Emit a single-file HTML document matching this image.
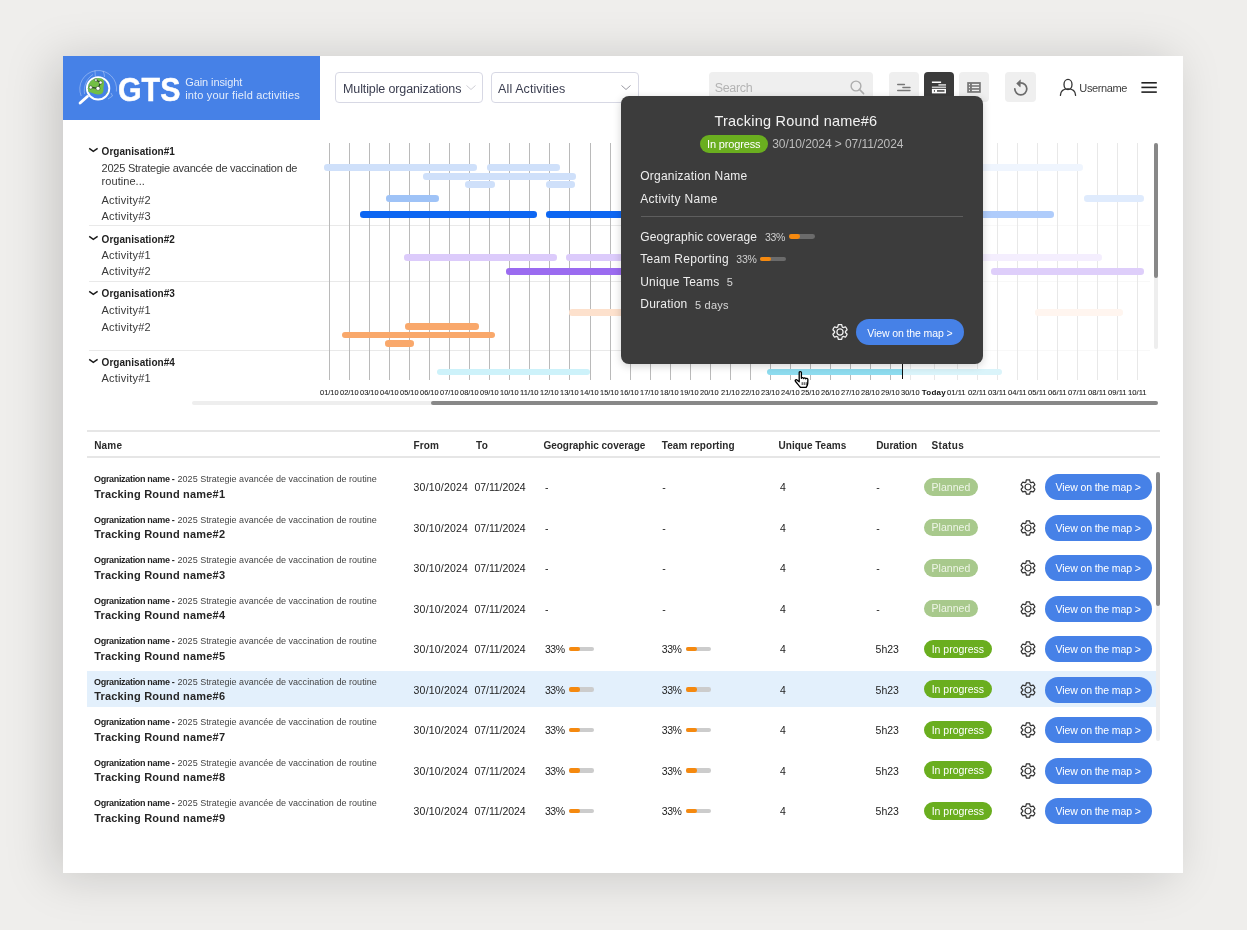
<!DOCTYPE html>
<html><head><meta charset="utf-8"><style>
html,body{margin:0;padding:0;}
body{width:1247px;height:930px;overflow:hidden;background:#efeeec;font-family:"Liberation Sans", sans-serif;position:relative;}
#wrap{position:absolute;left:0;top:0;width:1247px;height:930px;will-change:transform;}
</style></head><body><div id="wrap">
<div style="position:absolute;left:63.00px;top:56.00px;width:1120.00px;height:817.00px;background:#ffffff;border-radius:0px;box-shadow:-10px 3px 45px rgba(0,0,0,0.17);"></div>
<div style="position:absolute;left:63.00px;top:56.00px;width:257.00px;height:64.00px;background:#4681e7;border-radius:0px;"></div>
<svg style="position:absolute;left:70px;top:62px" width="50" height="50" viewBox="70 62 50 50">
<g fill="none" stroke="rgba(255,255,255,0.42)" stroke-width="0.8">
<path d="M81.2 96 A18.4 18.4 0 1 1 116.4 91.5"/>
<path d="M84.5 94 C83.5 87 86 79 93 74.5"/>
<path d="M95 70.5 L95.3 76.5 M103 71 C104 73 104.5 75 104.5 77"/>
<path d="M108 99 L112.5 96 L111 93"/>
</g>
<circle cx="98.1" cy="88.3" r="11.2" fill="#4681e7" stroke="#fff" stroke-width="1.9"/>
<clipPath id="lc"><circle cx="98.1" cy="88.3" r="10.3"/></clipPath>
<g clip-path="url(#lc)">
<path d="M86 79 C88 76 94 76.5 99 77 C102 77.5 104 79 104 83 C104 86 103 88 103.5 90.5 C103.5 93 101 95 97.5 94.5 C94 94 92 92.5 89 92 C86 91.5 85.5 88 86 85 Z" fill="#72bf44"/>
<path d="M106 94 C106.5 92 108 91 109.5 91 L109.5 95.5 L106.5 95.5 Z" fill="#72bf44"/>
</g>
<g stroke="#263d26" stroke-width="1.1" fill="none"><path d="M95.9 80.1 L100.6 82.5 L98 88.4 L90.7 87.4"/></g>
<g fill="#fff" stroke="#263d26" stroke-width="0.5"><circle cx="95.9" cy="80.1" r="1.3"/><circle cx="100.6" cy="82.5" r="1.6"/><circle cx="98" cy="88.4" r="2"/><circle cx="90.7" cy="87.4" r="1.6"/></g>
<path d="M80.1 103 L87.4 96.5" stroke="#fff" stroke-width="2.9" stroke-linecap="round"/>
</svg>
<div style="position:absolute;left:117.64px;top:69.00px;font-size:34px;line-height:40.00px;font-weight:700;color:#ffffff;letter-spacing:0.000px;white-space:pre;transform:scaleX(0.8930);transform-origin:0 0;-webkit-text-stroke:0.5px #fff;">GTS</div>
<div style="position:absolute;left:185.16px;top:75.00px;font-size:11px;line-height:14.00px;font-weight:400;color:#e3ecfb;letter-spacing:-0.083px;white-space:pre;">Gain insight</div>
<div style="position:absolute;left:185.16px;top:88.00px;font-size:11px;line-height:14.00px;font-weight:400;color:#e3ecfb;letter-spacing:0.156px;white-space:pre;">into your field activities</div>
<div style="position:absolute;left:335.00px;top:72.00px;width:148.00px;height:30.50px;background:#fff;border-radius:4px;box-sizing:border-box;border:1px solid #d7d8e4;"></div>
<div style="position:absolute;left:343.00px;top:81.00px;font-size:12.5px;line-height:16.00px;font-weight:400;color:#3b3e50;letter-spacing:-0.119px;white-space:pre;">Multiple organizations</div>
<svg style="position:absolute;left:465px;top:84px" width="12" height="7" viewBox="0 0 12 7"><path d="M1.5 1.5 L6 5.5 L10.5 1.5" fill="none" stroke="#cfcfd6" stroke-width="1"/></svg>
<div style="position:absolute;left:491.00px;top:72.00px;width:147.50px;height:30.50px;background:#fff;border-radius:4px;box-sizing:border-box;border:1px solid #d7d8e4;"></div>
<div style="position:absolute;left:498.10px;top:81.00px;font-size:12.5px;line-height:16.00px;font-weight:400;color:#3b3e50;letter-spacing:0.092px;white-space:pre;">All Activities</div>
<svg style="position:absolute;left:620px;top:84px" width="12" height="7" viewBox="0 0 12 7"><path d="M1.5 1.5 L6 5.5 L10.5 1.5" fill="none" stroke="#9a9aa3" stroke-width="1"/></svg>
<div style="position:absolute;left:709.00px;top:72.00px;width:164.00px;height:30.00px;background:#efefef;border-radius:4px;"></div>
<div style="position:absolute;left:714.70px;top:80.00px;font-size:12.5px;line-height:16.00px;font-weight:400;color:#b4b4b4;letter-spacing:-0.342px;white-space:pre;">Search</div>
<svg style="position:absolute;left:848.5px;top:78.6px" width="17" height="17" viewBox="0 0 17 17"><circle cx="7" cy="7" r="4.9" fill="none" stroke="#adadad" stroke-width="1.4"/><path d="M10.4 10.4 L14.6 14.6" stroke="#adadad" stroke-width="1.5" stroke-linecap="round"/></svg>
<div style="position:absolute;left:889.00px;top:72.00px;width:30.00px;height:30.00px;background:#efefef;border-radius:4px;"></div>
<div style="position:absolute;left:923.60px;top:72.00px;width:30.70px;height:30.00px;background:#3b3b3b;border-radius:4px;"></div>
<div style="position:absolute;left:959.00px;top:72.00px;width:30.00px;height:30.00px;background:#efefef;border-radius:4px;"></div>
<div style="position:absolute;left:1005.20px;top:72.00px;width:30.50px;height:30.00px;background:#efefef;border-radius:4px;"></div>
<svg style="position:absolute;left:886px;top:70px" width="106" height="34" viewBox="886 70 106 34">
<g fill="#777"><rect x="897" y="83.8" width="8.1" height="1.5" rx="0.7"/><rect x="902.2" y="86.8" width="8.5" height="1.5" rx="0.7"/><rect x="897" y="89.7" width="13.7" height="1.5" rx="0.7"/></g>
<rect x="931.9" y="81.5" width="9.2" height="1.5" fill="#fff"/>
<rect x="938.4" y="84.1" width="7.6" height="1.6" fill="#d0d0d0"/>
<rect x="931.9" y="86.5" width="14.1" height="1.6" fill="#c8c8c8"/>
<rect x="931.9" y="88.9" width="14.1" height="4.5" fill="#fff"/>
<rect x="933.9" y="90.2" width="1.1" height="1.5" fill="#3b3b3b"/><rect x="937" y="90.2" width="7.5" height="1.5" fill="#3b3b3b"/>
<rect x="967.2" y="82.1" width="13.6" height="10.7" fill="#777"/>
<g fill="#efefef"><rect x="971.9" y="83.9" width="7.2" height="1.3"/><rect x="971.9" y="86.8" width="7.2" height="1.3"/><rect x="971.9" y="89.8" width="7.2" height="1.3"/>
<rect x="968.9" y="83.9" width="1.1" height="1.3"/><rect x="968.9" y="86.8" width="1.1" height="1.3"/><rect x="968.9" y="89.8" width="1.1" height="1.3"/></g>
</svg>
<svg style="position:absolute;left:1005.2px;top:72px" width="31" height="30" viewBox="0 0 31 30">
<path d="M15.8 10.8 A6 6 0 1 1 9.8 16.8" fill="none" stroke="#6b6b6b" stroke-width="1.7" stroke-linecap="round"/>
<path d="M15.4 7.9 L11.6 11.5 L15.2 14.9 Z" fill="#6b6b6b" stroke="#6b6b6b" stroke-width="0.6" stroke-linejoin="round"/></svg>
<svg style="position:absolute;left:1059px;top:78px" width="18" height="19" viewBox="0 0 18 19">
<ellipse cx="9" cy="6.4" rx="4.0" ry="5.1" fill="none" stroke="#333" stroke-width="1.3"/>
<path d="M1.4 17.4 C1.6 13 4.8 10.9 9 10.9 C13.2 10.9 16.4 13 16.6 17.4" fill="none" stroke="#333" stroke-width="1.3" stroke-linecap="round"/></svg>
<div style="position:absolute;left:1079.36px;top:81.00px;font-size:11px;line-height:14.00px;font-weight:400;color:#3d3d3d;letter-spacing:-0.381px;white-space:pre;">Username</div>
<svg style="position:absolute;left:1140px;top:80px" width="18" height="15" viewBox="1140 80 18 15"><g fill="#222"><rect x="1141.4" y="82" width="15.4" height="1.6"/><rect x="1141.4" y="86.6" width="15.4" height="1.6"/><rect x="1141.4" y="91.3" width="15.4" height="1.6"/></g></svg>
<svg style="position:absolute;left:88px;top:146.1px" width="11" height="7" viewBox="0 0 11 7"><path d="M1.2 2.3 L5.3 5.3 L9.6 2.3" fill="none" stroke="#1a1a1a" stroke-width="1.45"/></svg>
<div style="position:absolute;left:101.60px;top:145.00px;font-size:10px;line-height:13.00px;font-weight:700;color:#1e1e1e;letter-spacing:0.037px;white-space:pre;">Organisation#1</div>
<svg style="position:absolute;left:88px;top:233.6px" width="11" height="7" viewBox="0 0 11 7"><path d="M1.2 2.3 L5.3 5.3 L9.6 2.3" fill="none" stroke="#1a1a1a" stroke-width="1.45"/></svg>
<div style="position:absolute;left:101.60px;top:233.00px;font-size:10px;line-height:13.00px;font-weight:700;color:#1e1e1e;letter-spacing:0.037px;white-space:pre;">Organisation#2</div>
<svg style="position:absolute;left:88px;top:288.5px" width="11" height="7" viewBox="0 0 11 7"><path d="M1.2 2.3 L5.3 5.3 L9.6 2.3" fill="none" stroke="#1a1a1a" stroke-width="1.45"/></svg>
<div style="position:absolute;left:101.60px;top:287.00px;font-size:10px;line-height:13.00px;font-weight:700;color:#1e1e1e;letter-spacing:0.037px;white-space:pre;">Organisation#3</div>
<svg style="position:absolute;left:88px;top:356.8px" width="11" height="7" viewBox="0 0 11 7"><path d="M1.2 2.3 L5.3 5.3 L9.6 2.3" fill="none" stroke="#1a1a1a" stroke-width="1.45"/></svg>
<div style="position:absolute;left:101.60px;top:356.00px;font-size:10px;line-height:13.00px;font-weight:700;color:#1e1e1e;letter-spacing:0.037px;white-space:pre;">Organisation#4</div>
<div style="position:absolute;left:101.56px;top:161.00px;font-size:11px;line-height:14.00px;font-weight:400;color:#383838;letter-spacing:-0.231px;white-space:pre;">2025 Strategie avancée de vaccination de</div>
<div style="position:absolute;left:101.56px;top:174.00px;font-size:11px;line-height:14.00px;font-weight:400;color:#383838;letter-spacing:0.063px;white-space:pre;">routine...</div>
<div style="position:absolute;left:101.56px;top:193.00px;font-size:11px;line-height:14.00px;font-weight:400;color:#383838;letter-spacing:0.222px;white-space:pre;">Activity#2</div>
<div style="position:absolute;left:101.56px;top:209.00px;font-size:11px;line-height:14.00px;font-weight:400;color:#383838;letter-spacing:0.222px;white-space:pre;">Activity#3</div>
<div style="position:absolute;left:101.56px;top:248.00px;font-size:11px;line-height:14.00px;font-weight:400;color:#383838;letter-spacing:0.222px;white-space:pre;">Activity#1</div>
<div style="position:absolute;left:101.56px;top:264.00px;font-size:11px;line-height:14.00px;font-weight:400;color:#383838;letter-spacing:0.222px;white-space:pre;">Activity#2</div>
<div style="position:absolute;left:101.56px;top:303.00px;font-size:11px;line-height:14.00px;font-weight:400;color:#383838;letter-spacing:0.222px;white-space:pre;">Activity#1</div>
<div style="position:absolute;left:101.56px;top:320.00px;font-size:11px;line-height:14.00px;font-weight:400;color:#383838;letter-spacing:0.222px;white-space:pre;">Activity#2</div>
<div style="position:absolute;left:101.56px;top:371.00px;font-size:11px;line-height:14.00px;font-weight:400;color:#383838;letter-spacing:0.222px;white-space:pre;">Activity#1</div>
<div style="position:absolute;left:88.70px;top:225.20px;width:1061.80px;height:1.10px;background:#e9e9e9;border-radius:0px;"></div>
<div style="position:absolute;left:88.70px;top:280.80px;width:1061.80px;height:1.10px;background:#e9e9e9;border-radius:0px;"></div>
<div style="position:absolute;left:88.70px;top:350.10px;width:1061.80px;height:1.10px;background:#e9e9e9;border-radius:0px;"></div>
<div style="position:absolute;left:328.50px;top:143.00px;width:1.00px;height:237.00px;background:#bababa;border-radius:0px;"></div>
<div style="position:absolute;left:348.50px;top:143.00px;width:1.00px;height:237.00px;background:#bababa;border-radius:0px;"></div>
<div style="position:absolute;left:368.50px;top:143.00px;width:1.00px;height:237.00px;background:#bababa;border-radius:0px;"></div>
<div style="position:absolute;left:388.50px;top:143.00px;width:1.00px;height:237.00px;background:#bababa;border-radius:0px;"></div>
<div style="position:absolute;left:408.50px;top:143.00px;width:1.00px;height:237.00px;background:#bababa;border-radius:0px;"></div>
<div style="position:absolute;left:428.50px;top:143.00px;width:1.00px;height:237.00px;background:#bababa;border-radius:0px;"></div>
<div style="position:absolute;left:448.50px;top:143.00px;width:1.00px;height:237.00px;background:#bababa;border-radius:0px;"></div>
<div style="position:absolute;left:468.50px;top:143.00px;width:1.00px;height:237.00px;background:#bababa;border-radius:0px;"></div>
<div style="position:absolute;left:488.50px;top:143.00px;width:1.00px;height:237.00px;background:#bababa;border-radius:0px;"></div>
<div style="position:absolute;left:508.50px;top:143.00px;width:1.00px;height:237.00px;background:#bababa;border-radius:0px;"></div>
<div style="position:absolute;left:528.50px;top:143.00px;width:1.00px;height:237.00px;background:#bababa;border-radius:0px;"></div>
<div style="position:absolute;left:548.50px;top:143.00px;width:1.00px;height:237.00px;background:#bababa;border-radius:0px;"></div>
<div style="position:absolute;left:568.50px;top:143.00px;width:1.00px;height:237.00px;background:#bababa;border-radius:0px;"></div>
<div style="position:absolute;left:589.50px;top:143.00px;width:1.00px;height:237.00px;background:#bababa;border-radius:0px;"></div>
<div style="position:absolute;left:609.50px;top:143.00px;width:1.00px;height:237.00px;background:#bababa;border-radius:0px;"></div>
<div style="position:absolute;left:629.50px;top:143.00px;width:1.00px;height:237.00px;background:#bababa;border-radius:0px;"></div>
<div style="position:absolute;left:649.50px;top:143.00px;width:1.00px;height:237.00px;background:#bababa;border-radius:0px;"></div>
<div style="position:absolute;left:669.50px;top:143.00px;width:1.00px;height:237.00px;background:#bababa;border-radius:0px;"></div>
<div style="position:absolute;left:689.50px;top:143.00px;width:1.00px;height:237.00px;background:#bababa;border-radius:0px;"></div>
<div style="position:absolute;left:709.50px;top:143.00px;width:1.00px;height:237.00px;background:#bababa;border-radius:0px;"></div>
<div style="position:absolute;left:729.50px;top:143.00px;width:1.00px;height:237.00px;background:#bababa;border-radius:0px;"></div>
<div style="position:absolute;left:749.50px;top:143.00px;width:1.00px;height:237.00px;background:#bababa;border-radius:0px;"></div>
<div style="position:absolute;left:769.50px;top:143.00px;width:1.00px;height:237.00px;background:#bababa;border-radius:0px;"></div>
<div style="position:absolute;left:789.50px;top:143.00px;width:1.00px;height:237.00px;background:#bababa;border-radius:0px;"></div>
<div style="position:absolute;left:809.50px;top:143.00px;width:1.00px;height:237.00px;background:#bababa;border-radius:0px;"></div>
<div style="position:absolute;left:829.50px;top:143.00px;width:1.00px;height:237.00px;background:#bababa;border-radius:0px;"></div>
<div style="position:absolute;left:849.50px;top:143.00px;width:1.00px;height:237.00px;background:#bababa;border-radius:0px;"></div>
<div style="position:absolute;left:869.50px;top:143.00px;width:1.00px;height:237.00px;background:#bababa;border-radius:0px;"></div>
<div style="position:absolute;left:889.50px;top:143.00px;width:1.00px;height:237.00px;background:#bababa;border-radius:0px;"></div>
<div style="position:absolute;left:909.50px;top:143.00px;width:1.00px;height:237.00px;background:#bababa;border-radius:0px;"></div>
<div style="position:absolute;left:933.50px;top:143.00px;width:1.00px;height:237.00px;background:#bababa;border-radius:0px;"></div>
<div style="position:absolute;left:956.50px;top:143.00px;width:1.00px;height:237.00px;background:#bababa;border-radius:0px;"></div>
<div style="position:absolute;left:976.50px;top:143.00px;width:1.00px;height:237.00px;background:#bababa;border-radius:0px;"></div>
<div style="position:absolute;left:996.50px;top:143.00px;width:1.00px;height:237.00px;background:#bababa;border-radius:0px;"></div>
<div style="position:absolute;left:1016.50px;top:143.00px;width:1.00px;height:237.00px;background:#bababa;border-radius:0px;"></div>
<div style="position:absolute;left:1036.50px;top:143.00px;width:1.00px;height:237.00px;background:#bababa;border-radius:0px;"></div>
<div style="position:absolute;left:1056.50px;top:143.00px;width:1.00px;height:237.00px;background:#bababa;border-radius:0px;"></div>
<div style="position:absolute;left:1076.50px;top:143.00px;width:1.00px;height:237.00px;background:#bababa;border-radius:0px;"></div>
<div style="position:absolute;left:1096.50px;top:143.00px;width:1.00px;height:237.00px;background:#bababa;border-radius:0px;"></div>
<div style="position:absolute;left:1116.50px;top:143.00px;width:1.00px;height:237.00px;background:#bababa;border-radius:0px;"></div>
<div style="position:absolute;left:1136.50px;top:143.00px;width:1.00px;height:237.00px;background:#bababa;border-radius:0px;"></div>
<div style="position:absolute;left:323.70px;top:164.30px;width:152.90px;height:6.60px;background:#cfe0fa;border-radius:3.3px;"></div>
<div style="position:absolute;left:486.60px;top:164.30px;width:73.40px;height:6.60px;background:#cfe0fa;border-radius:3.3px;"></div>
<div style="position:absolute;left:700.00px;top:164.30px;width:383.20px;height:6.60px;background:#cfe0fa;border-radius:3.3px;"></div>
<div style="position:absolute;left:423.20px;top:173.10px;width:152.80px;height:6.60px;background:#cfe0fa;border-radius:3.3px;"></div>
<div style="position:absolute;left:465.20px;top:181.30px;width:29.60px;height:6.60px;background:#cfe0fa;border-radius:3.3px;"></div>
<div style="position:absolute;left:545.60px;top:181.30px;width:29.20px;height:6.60px;background:#cfe0fa;border-radius:3.3px;"></div>
<div style="position:absolute;left:386.00px;top:195.00px;width:52.90px;height:6.60px;background:#9fc3f7;border-radius:3.3px;"></div>
<div style="position:absolute;left:1084.00px;top:195.00px;width:60.20px;height:6.60px;background:#9fc3f7;border-radius:3.3px;"></div>
<div style="position:absolute;left:360.00px;top:211.20px;width:177.10px;height:6.60px;background:#0d66f2;border-radius:3.3px;"></div>
<div style="position:absolute;left:546.10px;top:211.20px;width:507.90px;height:6.60px;background:#0d66f2;border-radius:3.3px;"></div>
<div style="position:absolute;left:403.70px;top:254.10px;width:152.90px;height:6.60px;background:#dccbfb;border-radius:3.3px;"></div>
<div style="position:absolute;left:565.60px;top:254.10px;width:536.80px;height:6.60px;background:#dccbfb;border-radius:3.3px;"></div>
<div style="position:absolute;left:506.40px;top:268.00px;width:293.60px;height:6.60px;background:#9b6bf0;border-radius:3.3px;"></div>
<div style="position:absolute;left:991.40px;top:268.00px;width:152.80px;height:6.60px;background:#9b6bf0;border-radius:3.3px;"></div>
<div style="position:absolute;left:568.50px;top:309.10px;width:151.50px;height:6.60px;background:#fde1cd;border-radius:3.3px;"></div>
<div style="position:absolute;left:1035.20px;top:309.10px;width:87.50px;height:6.60px;background:#fde1cd;border-radius:3.3px;"></div>
<div style="position:absolute;left:405.20px;top:323.10px;width:73.80px;height:6.60px;background:#f9a86b;border-radius:3.3px;"></div>
<div style="position:absolute;left:342.30px;top:331.80px;width:152.90px;height:6.60px;background:#f9a86b;border-radius:3.3px;"></div>
<div style="position:absolute;left:385.10px;top:340.00px;width:29.30px;height:6.60px;background:#f9a86b;border-radius:3.3px;"></div>
<div style="position:absolute;left:437.30px;top:369.00px;width:153.10px;height:6.20px;background:#cdf2fa;border-radius:3.1px;"></div>
<div style="position:absolute;left:766.80px;top:369.00px;width:234.90px;height:6.20px;background:#8edcef;border-radius:3.1px;"></div>
<div style="position:absolute;left:902.80px;top:142.00px;width:249.20px;height:239.00px;background:rgba(255,255,255,0.67);border-radius:0px;"></div>
<div style="position:absolute;left:901.70px;top:350.00px;width:1.60px;height:29.20px;background:#111;border-radius:0px;"></div>
<div style="position:absolute;left:319.70px;top:387.00px;font-size:7.5px;line-height:11.00px;font-weight:400;color:#222;letter-spacing:0.000px;white-space:pre;transform:scaleX(0.9900);transform-origin:0 0;-webkit-text-stroke:0.1px #222;">01/10</div>
<div style="position:absolute;left:339.74px;top:387.00px;font-size:7.5px;line-height:11.00px;font-weight:400;color:#222;letter-spacing:0.000px;white-space:pre;transform:scaleX(0.9900);transform-origin:0 0;-webkit-text-stroke:0.1px #222;">02/10</div>
<div style="position:absolute;left:359.78px;top:387.00px;font-size:7.5px;line-height:11.00px;font-weight:400;color:#222;letter-spacing:0.000px;white-space:pre;transform:scaleX(0.9900);transform-origin:0 0;-webkit-text-stroke:0.1px #222;">03/10</div>
<div style="position:absolute;left:379.82px;top:387.00px;font-size:7.5px;line-height:11.00px;font-weight:400;color:#222;letter-spacing:0.000px;white-space:pre;transform:scaleX(0.9900);transform-origin:0 0;-webkit-text-stroke:0.1px #222;">04/10</div>
<div style="position:absolute;left:399.86px;top:387.00px;font-size:7.5px;line-height:11.00px;font-weight:400;color:#222;letter-spacing:0.000px;white-space:pre;transform:scaleX(0.9900);transform-origin:0 0;-webkit-text-stroke:0.1px #222;">05/10</div>
<div style="position:absolute;left:419.90px;top:387.00px;font-size:7.5px;line-height:11.00px;font-weight:400;color:#222;letter-spacing:0.000px;white-space:pre;transform:scaleX(0.9900);transform-origin:0 0;-webkit-text-stroke:0.1px #222;">06/10</div>
<div style="position:absolute;left:439.94px;top:387.00px;font-size:7.5px;line-height:11.00px;font-weight:400;color:#222;letter-spacing:0.000px;white-space:pre;transform:scaleX(0.9900);transform-origin:0 0;-webkit-text-stroke:0.1px #222;">07/10</div>
<div style="position:absolute;left:459.98px;top:387.00px;font-size:7.5px;line-height:11.00px;font-weight:400;color:#222;letter-spacing:0.000px;white-space:pre;transform:scaleX(0.9900);transform-origin:0 0;-webkit-text-stroke:0.1px #222;">08/10</div>
<div style="position:absolute;left:480.02px;top:387.00px;font-size:7.5px;line-height:11.00px;font-weight:400;color:#222;letter-spacing:0.000px;white-space:pre;transform:scaleX(0.9900);transform-origin:0 0;-webkit-text-stroke:0.1px #222;">09/10</div>
<div style="position:absolute;left:500.06px;top:387.00px;font-size:7.5px;line-height:11.00px;font-weight:400;color:#222;letter-spacing:0.000px;white-space:pre;transform:scaleX(0.9900);transform-origin:0 0;-webkit-text-stroke:0.1px #222;">10/10</div>
<div style="position:absolute;left:520.09px;top:387.00px;font-size:7.5px;line-height:11.00px;font-weight:400;color:#222;letter-spacing:0.000px;white-space:pre;transform:scaleX(1.0216);transform-origin:0 0;-webkit-text-stroke:0.1px #222;">11/10</div>
<div style="position:absolute;left:540.14px;top:387.00px;font-size:7.5px;line-height:11.00px;font-weight:400;color:#222;letter-spacing:0.000px;white-space:pre;transform:scaleX(0.9900);transform-origin:0 0;-webkit-text-stroke:0.1px #222;">12/10</div>
<div style="position:absolute;left:560.18px;top:387.00px;font-size:7.5px;line-height:11.00px;font-weight:400;color:#222;letter-spacing:0.000px;white-space:pre;transform:scaleX(0.9900);transform-origin:0 0;-webkit-text-stroke:0.1px #222;">13/10</div>
<div style="position:absolute;left:580.22px;top:387.00px;font-size:7.5px;line-height:11.00px;font-weight:400;color:#222;letter-spacing:0.000px;white-space:pre;transform:scaleX(0.9900);transform-origin:0 0;-webkit-text-stroke:0.1px #222;">14/10</div>
<div style="position:absolute;left:600.26px;top:387.00px;font-size:7.5px;line-height:11.00px;font-weight:400;color:#222;letter-spacing:0.000px;white-space:pre;transform:scaleX(0.9900);transform-origin:0 0;-webkit-text-stroke:0.1px #222;">15/10</div>
<div style="position:absolute;left:620.30px;top:387.00px;font-size:7.5px;line-height:11.00px;font-weight:400;color:#222;letter-spacing:0.000px;white-space:pre;transform:scaleX(0.9900);transform-origin:0 0;-webkit-text-stroke:0.1px #222;">16/10</div>
<div style="position:absolute;left:640.34px;top:387.00px;font-size:7.5px;line-height:11.00px;font-weight:400;color:#222;letter-spacing:0.000px;white-space:pre;transform:scaleX(0.9900);transform-origin:0 0;-webkit-text-stroke:0.1px #222;">17/10</div>
<div style="position:absolute;left:660.38px;top:387.00px;font-size:7.5px;line-height:11.00px;font-weight:400;color:#222;letter-spacing:0.000px;white-space:pre;transform:scaleX(0.9900);transform-origin:0 0;-webkit-text-stroke:0.1px #222;">18/10</div>
<div style="position:absolute;left:680.42px;top:387.00px;font-size:7.5px;line-height:11.00px;font-weight:400;color:#222;letter-spacing:0.000px;white-space:pre;transform:scaleX(0.9900);transform-origin:0 0;-webkit-text-stroke:0.1px #222;">19/10</div>
<div style="position:absolute;left:700.46px;top:387.00px;font-size:7.5px;line-height:11.00px;font-weight:400;color:#222;letter-spacing:0.000px;white-space:pre;transform:scaleX(0.9900);transform-origin:0 0;-webkit-text-stroke:0.1px #222;">20/10</div>
<div style="position:absolute;left:720.50px;top:387.00px;font-size:7.5px;line-height:11.00px;font-weight:400;color:#222;letter-spacing:0.000px;white-space:pre;transform:scaleX(0.9900);transform-origin:0 0;-webkit-text-stroke:0.1px #222;">21/10</div>
<div style="position:absolute;left:740.54px;top:387.00px;font-size:7.5px;line-height:11.00px;font-weight:400;color:#222;letter-spacing:0.000px;white-space:pre;transform:scaleX(0.9900);transform-origin:0 0;-webkit-text-stroke:0.1px #222;">22/10</div>
<div style="position:absolute;left:760.58px;top:387.00px;font-size:7.5px;line-height:11.00px;font-weight:400;color:#222;letter-spacing:0.000px;white-space:pre;transform:scaleX(0.9900);transform-origin:0 0;-webkit-text-stroke:0.1px #222;">23/10</div>
<div style="position:absolute;left:780.62px;top:387.00px;font-size:7.5px;line-height:11.00px;font-weight:400;color:#222;letter-spacing:0.000px;white-space:pre;transform:scaleX(0.9900);transform-origin:0 0;-webkit-text-stroke:0.1px #222;">24/10</div>
<div style="position:absolute;left:800.66px;top:387.00px;font-size:7.5px;line-height:11.00px;font-weight:400;color:#222;letter-spacing:0.000px;white-space:pre;transform:scaleX(0.9900);transform-origin:0 0;-webkit-text-stroke:0.1px #222;">25/10</div>
<div style="position:absolute;left:820.70px;top:387.00px;font-size:7.5px;line-height:11.00px;font-weight:400;color:#222;letter-spacing:0.000px;white-space:pre;transform:scaleX(0.9900);transform-origin:0 0;-webkit-text-stroke:0.1px #222;">26/10</div>
<div style="position:absolute;left:840.74px;top:387.00px;font-size:7.5px;line-height:11.00px;font-weight:400;color:#222;letter-spacing:0.000px;white-space:pre;transform:scaleX(0.9900);transform-origin:0 0;-webkit-text-stroke:0.1px #222;">27/10</div>
<div style="position:absolute;left:860.78px;top:387.00px;font-size:7.5px;line-height:11.00px;font-weight:400;color:#222;letter-spacing:0.000px;white-space:pre;transform:scaleX(0.9900);transform-origin:0 0;-webkit-text-stroke:0.1px #222;">28/10</div>
<div style="position:absolute;left:880.82px;top:387.00px;font-size:7.5px;line-height:11.00px;font-weight:400;color:#222;letter-spacing:0.000px;white-space:pre;transform:scaleX(0.9900);transform-origin:0 0;-webkit-text-stroke:0.1px #222;">29/10</div>
<div style="position:absolute;left:900.86px;top:387.00px;font-size:7.5px;line-height:11.00px;font-weight:400;color:#222;letter-spacing:0.000px;white-space:pre;transform:scaleX(0.9900);transform-origin:0 0;-webkit-text-stroke:0.1px #222;">30/10</div>
<div style="position:absolute;left:921.73px;top:387.00px;font-size:8px;line-height:11.00px;font-weight:700;color:#111;letter-spacing:0.243px;white-space:pre;">Today</div>
<div style="position:absolute;left:947.49px;top:387.00px;font-size:7.5px;line-height:11.00px;font-weight:400;color:#222;letter-spacing:0.000px;white-space:pre;transform:scaleX(1.0216);transform-origin:0 0;-webkit-text-stroke:0.1px #222;">01/11</div>
<div style="position:absolute;left:967.53px;top:387.00px;font-size:7.5px;line-height:11.00px;font-weight:400;color:#222;letter-spacing:0.000px;white-space:pre;transform:scaleX(1.0216);transform-origin:0 0;-webkit-text-stroke:0.1px #222;">02/11</div>
<div style="position:absolute;left:987.57px;top:387.00px;font-size:7.5px;line-height:11.00px;font-weight:400;color:#222;letter-spacing:0.000px;white-space:pre;transform:scaleX(1.0216);transform-origin:0 0;-webkit-text-stroke:0.1px #222;">03/11</div>
<div style="position:absolute;left:1007.61px;top:387.00px;font-size:7.5px;line-height:11.00px;font-weight:400;color:#222;letter-spacing:0.000px;white-space:pre;transform:scaleX(1.0216);transform-origin:0 0;-webkit-text-stroke:0.1px #222;">04/11</div>
<div style="position:absolute;left:1027.65px;top:387.00px;font-size:7.5px;line-height:11.00px;font-weight:400;color:#222;letter-spacing:0.000px;white-space:pre;transform:scaleX(1.0216);transform-origin:0 0;-webkit-text-stroke:0.1px #222;">05/11</div>
<div style="position:absolute;left:1047.69px;top:387.00px;font-size:7.5px;line-height:11.00px;font-weight:400;color:#222;letter-spacing:0.000px;white-space:pre;transform:scaleX(1.0216);transform-origin:0 0;-webkit-text-stroke:0.1px #222;">06/11</div>
<div style="position:absolute;left:1067.73px;top:387.00px;font-size:7.5px;line-height:11.00px;font-weight:400;color:#222;letter-spacing:0.000px;white-space:pre;transform:scaleX(1.0216);transform-origin:0 0;-webkit-text-stroke:0.1px #222;">07/11</div>
<div style="position:absolute;left:1087.77px;top:387.00px;font-size:7.5px;line-height:11.00px;font-weight:400;color:#222;letter-spacing:0.000px;white-space:pre;transform:scaleX(1.0216);transform-origin:0 0;-webkit-text-stroke:0.1px #222;">08/11</div>
<div style="position:absolute;left:1107.81px;top:387.00px;font-size:7.5px;line-height:11.00px;font-weight:400;color:#222;letter-spacing:0.000px;white-space:pre;transform:scaleX(1.0216);transform-origin:0 0;-webkit-text-stroke:0.1px #222;">09/11</div>
<div style="position:absolute;left:1127.85px;top:387.00px;font-size:7.5px;line-height:11.00px;font-weight:400;color:#222;letter-spacing:0.000px;white-space:pre;transform:scaleX(1.0216);transform-origin:0 0;-webkit-text-stroke:0.1px #222;">10/11</div>
<div style="position:absolute;left:192.30px;top:401.20px;width:965.70px;height:4.00px;background:#eeeeee;border-radius:2px;"></div>
<div style="position:absolute;left:431.00px;top:401.20px;width:726.60px;height:4.00px;background:#888888;border-radius:2px;"></div>
<div style="position:absolute;left:1154.10px;top:143.40px;width:3.60px;height:205.60px;background:#eeeeee;border-radius:2px;"></div>
<div style="position:absolute;left:1154.10px;top:143.40px;width:3.60px;height:135.00px;background:#888888;border-radius:2px;"></div>
<div style="position:absolute;left:86.70px;top:430.40px;width:1073.30px;height:1.60px;background:#e6e6e6;border-radius:0px;"></div>
<div style="position:absolute;left:86.70px;top:456.00px;width:1073.30px;height:1.60px;background:#e6e6e6;border-radius:0px;"></div>
<div style="position:absolute;left:94.20px;top:439.00px;font-size:10px;line-height:13.00px;font-weight:700;color:#2a2a2a;letter-spacing:0.183px;white-space:pre;">Name</div>
<div style="position:absolute;left:413.60px;top:439.00px;font-size:10px;line-height:13.00px;font-weight:700;color:#2a2a2a;letter-spacing:0.100px;white-space:pre;">From</div>
<div style="position:absolute;left:476.10px;top:439.00px;font-size:10px;line-height:13.00px;font-weight:700;color:#2a2a2a;letter-spacing:0.316px;white-space:pre;">To</div>
<div style="position:absolute;left:543.50px;top:439.00px;font-size:10px;line-height:13.00px;font-weight:700;color:#2a2a2a;letter-spacing:-0.026px;white-space:pre;">Geographic coverage</div>
<div style="position:absolute;left:661.80px;top:439.00px;font-size:10px;line-height:13.00px;font-weight:700;color:#2a2a2a;letter-spacing:0.058px;white-space:pre;">Team reporting</div>
<div style="position:absolute;left:778.60px;top:439.00px;font-size:10px;line-height:13.00px;font-weight:700;color:#2a2a2a;letter-spacing:-0.001px;white-space:pre;">Unique Teams</div>
<div style="position:absolute;left:876.20px;top:439.00px;font-size:10px;line-height:13.00px;font-weight:700;color:#2a2a2a;letter-spacing:-0.044px;white-space:pre;">Duration</div>
<div style="position:absolute;left:931.60px;top:439.00px;font-size:10px;line-height:13.00px;font-weight:700;color:#2a2a2a;letter-spacing:0.308px;white-space:pre;">Status</div>
<div style="position:absolute;left:86.70px;top:670.90px;width:1069.30px;height:36.10px;background:#e3f0fc;border-radius:0px;"></div>
<div style="position:absolute;left:94.04px;top:473.00px;font-size:9px;line-height:12.00px;font-weight:700;color:#222;letter-spacing:-0.322px;white-space:pre;">Ogranization name -</div>
<div style="position:absolute;left:177.54px;top:473.00px;font-size:9px;line-height:12.00px;font-weight:400;color:#444;letter-spacing:0.034px;white-space:pre;">2025 Strategie avancée de vaccination de routine</div>
<div style="position:absolute;left:94.16px;top:487.00px;font-size:11px;line-height:14.00px;font-weight:700;color:#262626;letter-spacing:0.186px;white-space:pre;">Tracking Round name#1</div>
<div style="position:absolute;left:413.58px;top:480.00px;font-size:10.5px;line-height:14.00px;font-weight:400;color:#222;letter-spacing:0.186px;white-space:pre;">30/10/2024</div>
<div style="position:absolute;left:474.58px;top:480.00px;font-size:10.5px;line-height:14.00px;font-weight:400;color:#222;letter-spacing:-0.093px;white-space:pre;">07/11/2024</div>
<div style="position:absolute;left:545.08px;top:480.00px;font-size:10.5px;line-height:14.00px;font-weight:400;color:#222;letter-spacing:0.000px;white-space:pre;">-</div>
<div style="position:absolute;left:662.28px;top:480.00px;font-size:10.5px;line-height:14.00px;font-weight:400;color:#222;letter-spacing:0.000px;white-space:pre;">-</div>
<div style="position:absolute;left:876.18px;top:480.00px;font-size:10.5px;line-height:14.00px;font-weight:400;color:#222;letter-spacing:0.000px;white-space:pre;">-</div>
<div style="position:absolute;left:924.00px;top:478.00px;width:53.90px;height:17.50px;background:#a8c98c;border-radius:9px;"></div>
<div style="position:absolute;left:931.48px;top:480.00px;font-size:10.5px;line-height:14.00px;font-weight:400;color:#eef5e6;letter-spacing:0.049px;white-space:pre;">Planned</div>
<div style="position:absolute;left:779.88px;top:480.00px;font-size:10.5px;line-height:14.00px;font-weight:400;color:#222;letter-spacing:0.000px;white-space:pre;">4</div>
<svg style="position:absolute;left:1017.70px;top:477.00px" width="20" height="20" viewBox="-10 -10 20 20"><g transform="scale(1.033)"><path fill="none" stroke="#333333" stroke-width="1.2" stroke-linejoin="round" d="M-2.16 -4.62 L-1.57 -6.82 A7.0 7.0 0 0 1 1.57 -6.82 L2.16 -4.62 A5.1 5.1 0 0 1 2.93 -4.18 L5.12 -4.77 A7.0 7.0 0 0 1 6.69 -2.05 L5.08 -0.44 A5.1 5.1 0 0 1 5.08 0.44 L6.69 2.05 A7.0 7.0 0 0 1 5.12 4.77 L2.93 4.18 A5.1 5.1 0 0 1 2.16 4.62 L1.57 6.82 A7.0 7.0 0 0 1 -1.57 6.82 L-2.16 4.62 A5.1 5.1 0 0 1 -2.93 4.18 L-5.12 4.77 A7.0 7.0 0 0 1 -6.69 2.05 L-5.08 0.44 A5.1 5.1 0 0 1 -5.08 -0.44 L-6.69 -2.05 A7.0 7.0 0 0 1 -5.12 -4.77 L-2.93 -4.18 A5.1 5.1 0 0 1 -2.16 -4.62 Z"/><circle cx="0" cy="0" r="2.9" fill="none" stroke="#333333" stroke-width="1.2"/></g></svg>
<div style="position:absolute;left:1044.70px;top:474.00px;width:107.30px;height:26.00px;background:#4681e7;border-radius:13px;"></div>
<div style="position:absolute;left:1055.53px;top:480.00px;font-size:10.5px;line-height:14.00px;font-weight:400;color:#ffffff;letter-spacing:-0.109px;white-space:pre;">View on the map &gt;</div>
<div style="position:absolute;left:94.04px;top:514.00px;font-size:9px;line-height:12.00px;font-weight:700;color:#222;letter-spacing:-0.322px;white-space:pre;">Ogranization name -</div>
<div style="position:absolute;left:177.54px;top:514.00px;font-size:9px;line-height:12.00px;font-weight:400;color:#444;letter-spacing:0.034px;white-space:pre;">2025 Strategie avancée de vaccination de routine</div>
<div style="position:absolute;left:94.16px;top:527.00px;font-size:11px;line-height:14.00px;font-weight:700;color:#262626;letter-spacing:0.186px;white-space:pre;">Tracking Round name#2</div>
<div style="position:absolute;left:413.58px;top:521.00px;font-size:10.5px;line-height:14.00px;font-weight:400;color:#222;letter-spacing:0.186px;white-space:pre;">30/10/2024</div>
<div style="position:absolute;left:474.58px;top:521.00px;font-size:10.5px;line-height:14.00px;font-weight:400;color:#222;letter-spacing:-0.093px;white-space:pre;">07/11/2024</div>
<div style="position:absolute;left:545.08px;top:521.00px;font-size:10.5px;line-height:14.00px;font-weight:400;color:#222;letter-spacing:0.000px;white-space:pre;">-</div>
<div style="position:absolute;left:662.28px;top:521.00px;font-size:10.5px;line-height:14.00px;font-weight:400;color:#222;letter-spacing:0.000px;white-space:pre;">-</div>
<div style="position:absolute;left:876.18px;top:521.00px;font-size:10.5px;line-height:14.00px;font-weight:400;color:#222;letter-spacing:0.000px;white-space:pre;">-</div>
<div style="position:absolute;left:924.00px;top:518.50px;width:53.90px;height:17.50px;background:#a8c98c;border-radius:9px;"></div>
<div style="position:absolute;left:931.48px;top:520.00px;font-size:10.5px;line-height:14.00px;font-weight:400;color:#eef5e6;letter-spacing:0.049px;white-space:pre;">Planned</div>
<div style="position:absolute;left:779.88px;top:521.00px;font-size:10.5px;line-height:14.00px;font-weight:400;color:#222;letter-spacing:0.000px;white-space:pre;">4</div>
<svg style="position:absolute;left:1017.70px;top:517.50px" width="20" height="20" viewBox="-10 -10 20 20"><g transform="scale(1.033)"><path fill="none" stroke="#333333" stroke-width="1.2" stroke-linejoin="round" d="M-2.16 -4.62 L-1.57 -6.82 A7.0 7.0 0 0 1 1.57 -6.82 L2.16 -4.62 A5.1 5.1 0 0 1 2.93 -4.18 L5.12 -4.77 A7.0 7.0 0 0 1 6.69 -2.05 L5.08 -0.44 A5.1 5.1 0 0 1 5.08 0.44 L6.69 2.05 A7.0 7.0 0 0 1 5.12 4.77 L2.93 4.18 A5.1 5.1 0 0 1 2.16 4.62 L1.57 6.82 A7.0 7.0 0 0 1 -1.57 6.82 L-2.16 4.62 A5.1 5.1 0 0 1 -2.93 4.18 L-5.12 4.77 A7.0 7.0 0 0 1 -6.69 2.05 L-5.08 0.44 A5.1 5.1 0 0 1 -5.08 -0.44 L-6.69 -2.05 A7.0 7.0 0 0 1 -5.12 -4.77 L-2.93 -4.18 A5.1 5.1 0 0 1 -2.16 -4.62 Z"/><circle cx="0" cy="0" r="2.9" fill="none" stroke="#333333" stroke-width="1.2"/></g></svg>
<div style="position:absolute;left:1044.70px;top:514.50px;width:107.30px;height:26.00px;background:#4681e7;border-radius:13px;"></div>
<div style="position:absolute;left:1055.53px;top:521.00px;font-size:10.5px;line-height:14.00px;font-weight:400;color:#ffffff;letter-spacing:-0.109px;white-space:pre;">View on the map &gt;</div>
<div style="position:absolute;left:94.04px;top:554.00px;font-size:9px;line-height:12.00px;font-weight:700;color:#222;letter-spacing:-0.322px;white-space:pre;">Ogranization name -</div>
<div style="position:absolute;left:177.54px;top:554.00px;font-size:9px;line-height:12.00px;font-weight:400;color:#444;letter-spacing:0.034px;white-space:pre;">2025 Strategie avancée de vaccination de routine</div>
<div style="position:absolute;left:94.16px;top:568.00px;font-size:11px;line-height:14.00px;font-weight:700;color:#262626;letter-spacing:0.186px;white-space:pre;">Tracking Round name#3</div>
<div style="position:absolute;left:413.58px;top:561.00px;font-size:10.5px;line-height:14.00px;font-weight:400;color:#222;letter-spacing:0.186px;white-space:pre;">30/10/2024</div>
<div style="position:absolute;left:474.58px;top:561.00px;font-size:10.5px;line-height:14.00px;font-weight:400;color:#222;letter-spacing:-0.093px;white-space:pre;">07/11/2024</div>
<div style="position:absolute;left:545.08px;top:561.00px;font-size:10.5px;line-height:14.00px;font-weight:400;color:#222;letter-spacing:0.000px;white-space:pre;">-</div>
<div style="position:absolute;left:662.28px;top:561.00px;font-size:10.5px;line-height:14.00px;font-weight:400;color:#222;letter-spacing:0.000px;white-space:pre;">-</div>
<div style="position:absolute;left:876.18px;top:561.00px;font-size:10.5px;line-height:14.00px;font-weight:400;color:#222;letter-spacing:0.000px;white-space:pre;">-</div>
<div style="position:absolute;left:924.00px;top:559.00px;width:53.90px;height:17.50px;background:#a8c98c;border-radius:9px;"></div>
<div style="position:absolute;left:931.48px;top:561.00px;font-size:10.5px;line-height:14.00px;font-weight:400;color:#eef5e6;letter-spacing:0.049px;white-space:pre;">Planned</div>
<div style="position:absolute;left:779.88px;top:561.00px;font-size:10.5px;line-height:14.00px;font-weight:400;color:#222;letter-spacing:0.000px;white-space:pre;">4</div>
<svg style="position:absolute;left:1017.70px;top:558.00px" width="20" height="20" viewBox="-10 -10 20 20"><g transform="scale(1.033)"><path fill="none" stroke="#333333" stroke-width="1.2" stroke-linejoin="round" d="M-2.16 -4.62 L-1.57 -6.82 A7.0 7.0 0 0 1 1.57 -6.82 L2.16 -4.62 A5.1 5.1 0 0 1 2.93 -4.18 L5.12 -4.77 A7.0 7.0 0 0 1 6.69 -2.05 L5.08 -0.44 A5.1 5.1 0 0 1 5.08 0.44 L6.69 2.05 A7.0 7.0 0 0 1 5.12 4.77 L2.93 4.18 A5.1 5.1 0 0 1 2.16 4.62 L1.57 6.82 A7.0 7.0 0 0 1 -1.57 6.82 L-2.16 4.62 A5.1 5.1 0 0 1 -2.93 4.18 L-5.12 4.77 A7.0 7.0 0 0 1 -6.69 2.05 L-5.08 0.44 A5.1 5.1 0 0 1 -5.08 -0.44 L-6.69 -2.05 A7.0 7.0 0 0 1 -5.12 -4.77 L-2.93 -4.18 A5.1 5.1 0 0 1 -2.16 -4.62 Z"/><circle cx="0" cy="0" r="2.9" fill="none" stroke="#333333" stroke-width="1.2"/></g></svg>
<div style="position:absolute;left:1044.70px;top:555.00px;width:107.30px;height:26.00px;background:#4681e7;border-radius:13px;"></div>
<div style="position:absolute;left:1055.53px;top:561.00px;font-size:10.5px;line-height:14.00px;font-weight:400;color:#ffffff;letter-spacing:-0.109px;white-space:pre;">View on the map &gt;</div>
<div style="position:absolute;left:94.04px;top:595.00px;font-size:9px;line-height:12.00px;font-weight:700;color:#222;letter-spacing:-0.322px;white-space:pre;">Ogranization name -</div>
<div style="position:absolute;left:177.54px;top:595.00px;font-size:9px;line-height:12.00px;font-weight:400;color:#444;letter-spacing:0.034px;white-space:pre;">2025 Strategie avancée de vaccination de routine</div>
<div style="position:absolute;left:94.16px;top:608.00px;font-size:11px;line-height:14.00px;font-weight:700;color:#262626;letter-spacing:0.186px;white-space:pre;">Tracking Round name#4</div>
<div style="position:absolute;left:413.58px;top:602.00px;font-size:10.5px;line-height:14.00px;font-weight:400;color:#222;letter-spacing:0.186px;white-space:pre;">30/10/2024</div>
<div style="position:absolute;left:474.58px;top:602.00px;font-size:10.5px;line-height:14.00px;font-weight:400;color:#222;letter-spacing:-0.093px;white-space:pre;">07/11/2024</div>
<div style="position:absolute;left:545.08px;top:602.00px;font-size:10.5px;line-height:14.00px;font-weight:400;color:#222;letter-spacing:0.000px;white-space:pre;">-</div>
<div style="position:absolute;left:662.28px;top:602.00px;font-size:10.5px;line-height:14.00px;font-weight:400;color:#222;letter-spacing:0.000px;white-space:pre;">-</div>
<div style="position:absolute;left:876.18px;top:602.00px;font-size:10.5px;line-height:14.00px;font-weight:400;color:#222;letter-spacing:0.000px;white-space:pre;">-</div>
<div style="position:absolute;left:924.00px;top:599.50px;width:53.90px;height:17.50px;background:#a8c98c;border-radius:9px;"></div>
<div style="position:absolute;left:931.48px;top:601.00px;font-size:10.5px;line-height:14.00px;font-weight:400;color:#eef5e6;letter-spacing:0.049px;white-space:pre;">Planned</div>
<div style="position:absolute;left:779.88px;top:602.00px;font-size:10.5px;line-height:14.00px;font-weight:400;color:#222;letter-spacing:0.000px;white-space:pre;">4</div>
<svg style="position:absolute;left:1017.70px;top:598.50px" width="20" height="20" viewBox="-10 -10 20 20"><g transform="scale(1.033)"><path fill="none" stroke="#333333" stroke-width="1.2" stroke-linejoin="round" d="M-2.16 -4.62 L-1.57 -6.82 A7.0 7.0 0 0 1 1.57 -6.82 L2.16 -4.62 A5.1 5.1 0 0 1 2.93 -4.18 L5.12 -4.77 A7.0 7.0 0 0 1 6.69 -2.05 L5.08 -0.44 A5.1 5.1 0 0 1 5.08 0.44 L6.69 2.05 A7.0 7.0 0 0 1 5.12 4.77 L2.93 4.18 A5.1 5.1 0 0 1 2.16 4.62 L1.57 6.82 A7.0 7.0 0 0 1 -1.57 6.82 L-2.16 4.62 A5.1 5.1 0 0 1 -2.93 4.18 L-5.12 4.77 A7.0 7.0 0 0 1 -6.69 2.05 L-5.08 0.44 A5.1 5.1 0 0 1 -5.08 -0.44 L-6.69 -2.05 A7.0 7.0 0 0 1 -5.12 -4.77 L-2.93 -4.18 A5.1 5.1 0 0 1 -2.16 -4.62 Z"/><circle cx="0" cy="0" r="2.9" fill="none" stroke="#333333" stroke-width="1.2"/></g></svg>
<div style="position:absolute;left:1044.70px;top:595.50px;width:107.30px;height:26.00px;background:#4681e7;border-radius:13px;"></div>
<div style="position:absolute;left:1055.53px;top:602.00px;font-size:10.5px;line-height:14.00px;font-weight:400;color:#ffffff;letter-spacing:-0.109px;white-space:pre;">View on the map &gt;</div>
<div style="position:absolute;left:94.04px;top:635.00px;font-size:9px;line-height:12.00px;font-weight:700;color:#222;letter-spacing:-0.322px;white-space:pre;">Ogranization name -</div>
<div style="position:absolute;left:177.54px;top:635.00px;font-size:9px;line-height:12.00px;font-weight:400;color:#444;letter-spacing:0.034px;white-space:pre;">2025 Strategie avancée de vaccination de routine</div>
<div style="position:absolute;left:94.16px;top:649.00px;font-size:11px;line-height:14.00px;font-weight:700;color:#262626;letter-spacing:0.186px;white-space:pre;">Tracking Round name#5</div>
<div style="position:absolute;left:413.58px;top:642.00px;font-size:10.5px;line-height:14.00px;font-weight:400;color:#222;letter-spacing:0.186px;white-space:pre;">30/10/2024</div>
<div style="position:absolute;left:474.58px;top:642.00px;font-size:10.5px;line-height:14.00px;font-weight:400;color:#222;letter-spacing:-0.093px;white-space:pre;">07/11/2024</div>
<div style="position:absolute;left:544.98px;top:642.00px;font-size:10.5px;line-height:14.00px;font-weight:400;color:#222;letter-spacing:-0.438px;white-space:pre;">33%</div>
<div style="position:absolute;left:568.80px;top:646.80px;width:25.30px;height:4.40px;background:#cccccc;border-radius:2.2px;"></div>
<div style="position:absolute;left:568.80px;top:646.80px;width:11.20px;height:4.40px;background:#f5890f;border-radius:2.2px;"></div>
<div style="position:absolute;left:661.78px;top:642.00px;font-size:10.5px;line-height:14.00px;font-weight:400;color:#222;letter-spacing:-0.438px;white-space:pre;">33%</div>
<div style="position:absolute;left:685.50px;top:646.80px;width:25.30px;height:4.40px;background:#cccccc;border-radius:2.2px;"></div>
<div style="position:absolute;left:685.50px;top:646.80px;width:11.20px;height:4.40px;background:#f5890f;border-radius:2.2px;"></div>
<div style="position:absolute;left:875.58px;top:642.00px;font-size:10.5px;line-height:14.00px;font-weight:400;color:#222;letter-spacing:-0.006px;white-space:pre;">5h23</div>
<div style="position:absolute;left:924.00px;top:639.60px;width:67.80px;height:18.00px;background:#6aae1f;border-radius:9px;"></div>
<div style="position:absolute;left:931.73px;top:642.00px;font-size:10.5px;line-height:14.00px;font-weight:400;color:#ffffff;letter-spacing:-0.019px;white-space:pre;">In progress</div>
<div style="position:absolute;left:779.88px;top:642.00px;font-size:10.5px;line-height:14.00px;font-weight:400;color:#222;letter-spacing:0.000px;white-space:pre;">4</div>
<svg style="position:absolute;left:1017.70px;top:639.00px" width="20" height="20" viewBox="-10 -10 20 20"><g transform="scale(1.033)"><path fill="none" stroke="#333333" stroke-width="1.2" stroke-linejoin="round" d="M-2.16 -4.62 L-1.57 -6.82 A7.0 7.0 0 0 1 1.57 -6.82 L2.16 -4.62 A5.1 5.1 0 0 1 2.93 -4.18 L5.12 -4.77 A7.0 7.0 0 0 1 6.69 -2.05 L5.08 -0.44 A5.1 5.1 0 0 1 5.08 0.44 L6.69 2.05 A7.0 7.0 0 0 1 5.12 4.77 L2.93 4.18 A5.1 5.1 0 0 1 2.16 4.62 L1.57 6.82 A7.0 7.0 0 0 1 -1.57 6.82 L-2.16 4.62 A5.1 5.1 0 0 1 -2.93 4.18 L-5.12 4.77 A7.0 7.0 0 0 1 -6.69 2.05 L-5.08 0.44 A5.1 5.1 0 0 1 -5.08 -0.44 L-6.69 -2.05 A7.0 7.0 0 0 1 -5.12 -4.77 L-2.93 -4.18 A5.1 5.1 0 0 1 -2.16 -4.62 Z"/><circle cx="0" cy="0" r="2.9" fill="none" stroke="#333333" stroke-width="1.2"/></g></svg>
<div style="position:absolute;left:1044.70px;top:636.00px;width:107.30px;height:26.00px;background:#4681e7;border-radius:13px;"></div>
<div style="position:absolute;left:1055.53px;top:642.00px;font-size:10.5px;line-height:14.00px;font-weight:400;color:#ffffff;letter-spacing:-0.109px;white-space:pre;">View on the map &gt;</div>
<div style="position:absolute;left:94.04px;top:676.00px;font-size:9px;line-height:12.00px;font-weight:700;color:#222;letter-spacing:-0.322px;white-space:pre;">Ogranization name -</div>
<div style="position:absolute;left:177.54px;top:676.00px;font-size:9px;line-height:12.00px;font-weight:400;color:#444;letter-spacing:0.034px;white-space:pre;">2025 Strategie avancée de vaccination de routine</div>
<div style="position:absolute;left:94.16px;top:689.00px;font-size:11px;line-height:14.00px;font-weight:700;color:#262626;letter-spacing:0.186px;white-space:pre;">Tracking Round name#6</div>
<div style="position:absolute;left:413.58px;top:683.00px;font-size:10.5px;line-height:14.00px;font-weight:400;color:#222;letter-spacing:0.186px;white-space:pre;">30/10/2024</div>
<div style="position:absolute;left:474.58px;top:683.00px;font-size:10.5px;line-height:14.00px;font-weight:400;color:#222;letter-spacing:-0.093px;white-space:pre;">07/11/2024</div>
<div style="position:absolute;left:544.98px;top:683.00px;font-size:10.5px;line-height:14.00px;font-weight:400;color:#222;letter-spacing:-0.438px;white-space:pre;">33%</div>
<div style="position:absolute;left:568.80px;top:687.30px;width:25.30px;height:4.40px;background:#cccccc;border-radius:2.2px;"></div>
<div style="position:absolute;left:568.80px;top:687.30px;width:11.20px;height:4.40px;background:#f5890f;border-radius:2.2px;"></div>
<div style="position:absolute;left:661.78px;top:683.00px;font-size:10.5px;line-height:14.00px;font-weight:400;color:#222;letter-spacing:-0.438px;white-space:pre;">33%</div>
<div style="position:absolute;left:685.50px;top:687.30px;width:25.30px;height:4.40px;background:#cccccc;border-radius:2.2px;"></div>
<div style="position:absolute;left:685.50px;top:687.30px;width:11.20px;height:4.40px;background:#f5890f;border-radius:2.2px;"></div>
<div style="position:absolute;left:875.58px;top:683.00px;font-size:10.5px;line-height:14.00px;font-weight:400;color:#222;letter-spacing:-0.006px;white-space:pre;">5h23</div>
<div style="position:absolute;left:924.00px;top:680.10px;width:67.80px;height:18.00px;background:#6aae1f;border-radius:9px;"></div>
<div style="position:absolute;left:931.73px;top:682.00px;font-size:10.5px;line-height:14.00px;font-weight:400;color:#ffffff;letter-spacing:-0.019px;white-space:pre;">In progress</div>
<div style="position:absolute;left:779.88px;top:683.00px;font-size:10.5px;line-height:14.00px;font-weight:400;color:#222;letter-spacing:0.000px;white-space:pre;">4</div>
<svg style="position:absolute;left:1017.70px;top:679.50px" width="20" height="20" viewBox="-10 -10 20 20"><g transform="scale(1.033)"><path fill="none" stroke="#333333" stroke-width="1.2" stroke-linejoin="round" d="M-2.16 -4.62 L-1.57 -6.82 A7.0 7.0 0 0 1 1.57 -6.82 L2.16 -4.62 A5.1 5.1 0 0 1 2.93 -4.18 L5.12 -4.77 A7.0 7.0 0 0 1 6.69 -2.05 L5.08 -0.44 A5.1 5.1 0 0 1 5.08 0.44 L6.69 2.05 A7.0 7.0 0 0 1 5.12 4.77 L2.93 4.18 A5.1 5.1 0 0 1 2.16 4.62 L1.57 6.82 A7.0 7.0 0 0 1 -1.57 6.82 L-2.16 4.62 A5.1 5.1 0 0 1 -2.93 4.18 L-5.12 4.77 A7.0 7.0 0 0 1 -6.69 2.05 L-5.08 0.44 A5.1 5.1 0 0 1 -5.08 -0.44 L-6.69 -2.05 A7.0 7.0 0 0 1 -5.12 -4.77 L-2.93 -4.18 A5.1 5.1 0 0 1 -2.16 -4.62 Z"/><circle cx="0" cy="0" r="2.9" fill="none" stroke="#333333" stroke-width="1.2"/></g></svg>
<div style="position:absolute;left:1044.70px;top:676.50px;width:107.30px;height:26.00px;background:#4681e7;border-radius:13px;"></div>
<div style="position:absolute;left:1055.53px;top:683.00px;font-size:10.5px;line-height:14.00px;font-weight:400;color:#ffffff;letter-spacing:-0.109px;white-space:pre;">View on the map &gt;</div>
<div style="position:absolute;left:94.04px;top:716.00px;font-size:9px;line-height:12.00px;font-weight:700;color:#222;letter-spacing:-0.322px;white-space:pre;">Ogranization name -</div>
<div style="position:absolute;left:177.54px;top:716.00px;font-size:9px;line-height:12.00px;font-weight:400;color:#444;letter-spacing:0.034px;white-space:pre;">2025 Strategie avancée de vaccination de routine</div>
<div style="position:absolute;left:94.16px;top:730.00px;font-size:11px;line-height:14.00px;font-weight:700;color:#262626;letter-spacing:0.186px;white-space:pre;">Tracking Round name#7</div>
<div style="position:absolute;left:413.58px;top:723.00px;font-size:10.5px;line-height:14.00px;font-weight:400;color:#222;letter-spacing:0.186px;white-space:pre;">30/10/2024</div>
<div style="position:absolute;left:474.58px;top:723.00px;font-size:10.5px;line-height:14.00px;font-weight:400;color:#222;letter-spacing:-0.093px;white-space:pre;">07/11/2024</div>
<div style="position:absolute;left:544.98px;top:723.00px;font-size:10.5px;line-height:14.00px;font-weight:400;color:#222;letter-spacing:-0.438px;white-space:pre;">33%</div>
<div style="position:absolute;left:568.80px;top:727.80px;width:25.30px;height:4.40px;background:#cccccc;border-radius:2.2px;"></div>
<div style="position:absolute;left:568.80px;top:727.80px;width:11.20px;height:4.40px;background:#f5890f;border-radius:2.2px;"></div>
<div style="position:absolute;left:661.78px;top:723.00px;font-size:10.5px;line-height:14.00px;font-weight:400;color:#222;letter-spacing:-0.438px;white-space:pre;">33%</div>
<div style="position:absolute;left:685.50px;top:727.80px;width:25.30px;height:4.40px;background:#cccccc;border-radius:2.2px;"></div>
<div style="position:absolute;left:685.50px;top:727.80px;width:11.20px;height:4.40px;background:#f5890f;border-radius:2.2px;"></div>
<div style="position:absolute;left:875.58px;top:723.00px;font-size:10.5px;line-height:14.00px;font-weight:400;color:#222;letter-spacing:-0.006px;white-space:pre;">5h23</div>
<div style="position:absolute;left:924.00px;top:720.60px;width:67.80px;height:18.00px;background:#6aae1f;border-radius:9px;"></div>
<div style="position:absolute;left:931.73px;top:723.00px;font-size:10.5px;line-height:14.00px;font-weight:400;color:#ffffff;letter-spacing:-0.019px;white-space:pre;">In progress</div>
<div style="position:absolute;left:779.88px;top:723.00px;font-size:10.5px;line-height:14.00px;font-weight:400;color:#222;letter-spacing:0.000px;white-space:pre;">4</div>
<svg style="position:absolute;left:1017.70px;top:720.00px" width="20" height="20" viewBox="-10 -10 20 20"><g transform="scale(1.033)"><path fill="none" stroke="#333333" stroke-width="1.2" stroke-linejoin="round" d="M-2.16 -4.62 L-1.57 -6.82 A7.0 7.0 0 0 1 1.57 -6.82 L2.16 -4.62 A5.1 5.1 0 0 1 2.93 -4.18 L5.12 -4.77 A7.0 7.0 0 0 1 6.69 -2.05 L5.08 -0.44 A5.1 5.1 0 0 1 5.08 0.44 L6.69 2.05 A7.0 7.0 0 0 1 5.12 4.77 L2.93 4.18 A5.1 5.1 0 0 1 2.16 4.62 L1.57 6.82 A7.0 7.0 0 0 1 -1.57 6.82 L-2.16 4.62 A5.1 5.1 0 0 1 -2.93 4.18 L-5.12 4.77 A7.0 7.0 0 0 1 -6.69 2.05 L-5.08 0.44 A5.1 5.1 0 0 1 -5.08 -0.44 L-6.69 -2.05 A7.0 7.0 0 0 1 -5.12 -4.77 L-2.93 -4.18 A5.1 5.1 0 0 1 -2.16 -4.62 Z"/><circle cx="0" cy="0" r="2.9" fill="none" stroke="#333333" stroke-width="1.2"/></g></svg>
<div style="position:absolute;left:1044.70px;top:717.00px;width:107.30px;height:26.00px;background:#4681e7;border-radius:13px;"></div>
<div style="position:absolute;left:1055.53px;top:723.00px;font-size:10.5px;line-height:14.00px;font-weight:400;color:#ffffff;letter-spacing:-0.109px;white-space:pre;">View on the map &gt;</div>
<div style="position:absolute;left:94.04px;top:757.00px;font-size:9px;line-height:12.00px;font-weight:700;color:#222;letter-spacing:-0.322px;white-space:pre;">Ogranization name -</div>
<div style="position:absolute;left:177.54px;top:757.00px;font-size:9px;line-height:12.00px;font-weight:400;color:#444;letter-spacing:0.034px;white-space:pre;">2025 Strategie avancée de vaccination de routine</div>
<div style="position:absolute;left:94.16px;top:770.00px;font-size:11px;line-height:14.00px;font-weight:700;color:#262626;letter-spacing:0.186px;white-space:pre;">Tracking Round name#8</div>
<div style="position:absolute;left:413.58px;top:764.00px;font-size:10.5px;line-height:14.00px;font-weight:400;color:#222;letter-spacing:0.186px;white-space:pre;">30/10/2024</div>
<div style="position:absolute;left:474.58px;top:764.00px;font-size:10.5px;line-height:14.00px;font-weight:400;color:#222;letter-spacing:-0.093px;white-space:pre;">07/11/2024</div>
<div style="position:absolute;left:544.98px;top:764.00px;font-size:10.5px;line-height:14.00px;font-weight:400;color:#222;letter-spacing:-0.438px;white-space:pre;">33%</div>
<div style="position:absolute;left:568.80px;top:768.30px;width:25.30px;height:4.40px;background:#cccccc;border-radius:2.2px;"></div>
<div style="position:absolute;left:568.80px;top:768.30px;width:11.20px;height:4.40px;background:#f5890f;border-radius:2.2px;"></div>
<div style="position:absolute;left:661.78px;top:764.00px;font-size:10.5px;line-height:14.00px;font-weight:400;color:#222;letter-spacing:-0.438px;white-space:pre;">33%</div>
<div style="position:absolute;left:685.50px;top:768.30px;width:25.30px;height:4.40px;background:#cccccc;border-radius:2.2px;"></div>
<div style="position:absolute;left:685.50px;top:768.30px;width:11.20px;height:4.40px;background:#f5890f;border-radius:2.2px;"></div>
<div style="position:absolute;left:875.58px;top:764.00px;font-size:10.5px;line-height:14.00px;font-weight:400;color:#222;letter-spacing:-0.006px;white-space:pre;">5h23</div>
<div style="position:absolute;left:924.00px;top:761.10px;width:67.80px;height:18.00px;background:#6aae1f;border-radius:9px;"></div>
<div style="position:absolute;left:931.73px;top:763.00px;font-size:10.5px;line-height:14.00px;font-weight:400;color:#ffffff;letter-spacing:-0.019px;white-space:pre;">In progress</div>
<div style="position:absolute;left:779.88px;top:764.00px;font-size:10.5px;line-height:14.00px;font-weight:400;color:#222;letter-spacing:0.000px;white-space:pre;">4</div>
<svg style="position:absolute;left:1017.70px;top:760.50px" width="20" height="20" viewBox="-10 -10 20 20"><g transform="scale(1.033)"><path fill="none" stroke="#333333" stroke-width="1.2" stroke-linejoin="round" d="M-2.16 -4.62 L-1.57 -6.82 A7.0 7.0 0 0 1 1.57 -6.82 L2.16 -4.62 A5.1 5.1 0 0 1 2.93 -4.18 L5.12 -4.77 A7.0 7.0 0 0 1 6.69 -2.05 L5.08 -0.44 A5.1 5.1 0 0 1 5.08 0.44 L6.69 2.05 A7.0 7.0 0 0 1 5.12 4.77 L2.93 4.18 A5.1 5.1 0 0 1 2.16 4.62 L1.57 6.82 A7.0 7.0 0 0 1 -1.57 6.82 L-2.16 4.62 A5.1 5.1 0 0 1 -2.93 4.18 L-5.12 4.77 A7.0 7.0 0 0 1 -6.69 2.05 L-5.08 0.44 A5.1 5.1 0 0 1 -5.08 -0.44 L-6.69 -2.05 A7.0 7.0 0 0 1 -5.12 -4.77 L-2.93 -4.18 A5.1 5.1 0 0 1 -2.16 -4.62 Z"/><circle cx="0" cy="0" r="2.9" fill="none" stroke="#333333" stroke-width="1.2"/></g></svg>
<div style="position:absolute;left:1044.70px;top:757.50px;width:107.30px;height:26.00px;background:#4681e7;border-radius:13px;"></div>
<div style="position:absolute;left:1055.53px;top:764.00px;font-size:10.5px;line-height:14.00px;font-weight:400;color:#ffffff;letter-spacing:-0.109px;white-space:pre;">View on the map &gt;</div>
<div style="position:absolute;left:94.04px;top:797.00px;font-size:9px;line-height:12.00px;font-weight:700;color:#222;letter-spacing:-0.322px;white-space:pre;">Ogranization name -</div>
<div style="position:absolute;left:177.54px;top:797.00px;font-size:9px;line-height:12.00px;font-weight:400;color:#444;letter-spacing:0.034px;white-space:pre;">2025 Strategie avancée de vaccination de routine</div>
<div style="position:absolute;left:94.16px;top:811.00px;font-size:11px;line-height:14.00px;font-weight:700;color:#262626;letter-spacing:0.186px;white-space:pre;">Tracking Round name#9</div>
<div style="position:absolute;left:413.58px;top:804.00px;font-size:10.5px;line-height:14.00px;font-weight:400;color:#222;letter-spacing:0.186px;white-space:pre;">30/10/2024</div>
<div style="position:absolute;left:474.58px;top:804.00px;font-size:10.5px;line-height:14.00px;font-weight:400;color:#222;letter-spacing:-0.093px;white-space:pre;">07/11/2024</div>
<div style="position:absolute;left:544.98px;top:804.00px;font-size:10.5px;line-height:14.00px;font-weight:400;color:#222;letter-spacing:-0.438px;white-space:pre;">33%</div>
<div style="position:absolute;left:568.80px;top:808.80px;width:25.30px;height:4.40px;background:#cccccc;border-radius:2.2px;"></div>
<div style="position:absolute;left:568.80px;top:808.80px;width:11.20px;height:4.40px;background:#f5890f;border-radius:2.2px;"></div>
<div style="position:absolute;left:661.78px;top:804.00px;font-size:10.5px;line-height:14.00px;font-weight:400;color:#222;letter-spacing:-0.438px;white-space:pre;">33%</div>
<div style="position:absolute;left:685.50px;top:808.80px;width:25.30px;height:4.40px;background:#cccccc;border-radius:2.2px;"></div>
<div style="position:absolute;left:685.50px;top:808.80px;width:11.20px;height:4.40px;background:#f5890f;border-radius:2.2px;"></div>
<div style="position:absolute;left:875.58px;top:804.00px;font-size:10.5px;line-height:14.00px;font-weight:400;color:#222;letter-spacing:-0.006px;white-space:pre;">5h23</div>
<div style="position:absolute;left:924.00px;top:801.60px;width:67.80px;height:18.00px;background:#6aae1f;border-radius:9px;"></div>
<div style="position:absolute;left:931.73px;top:804.00px;font-size:10.5px;line-height:14.00px;font-weight:400;color:#ffffff;letter-spacing:-0.019px;white-space:pre;">In progress</div>
<div style="position:absolute;left:779.88px;top:804.00px;font-size:10.5px;line-height:14.00px;font-weight:400;color:#222;letter-spacing:0.000px;white-space:pre;">4</div>
<svg style="position:absolute;left:1017.70px;top:801.00px" width="20" height="20" viewBox="-10 -10 20 20"><g transform="scale(1.033)"><path fill="none" stroke="#333333" stroke-width="1.2" stroke-linejoin="round" d="M-2.16 -4.62 L-1.57 -6.82 A7.0 7.0 0 0 1 1.57 -6.82 L2.16 -4.62 A5.1 5.1 0 0 1 2.93 -4.18 L5.12 -4.77 A7.0 7.0 0 0 1 6.69 -2.05 L5.08 -0.44 A5.1 5.1 0 0 1 5.08 0.44 L6.69 2.05 A7.0 7.0 0 0 1 5.12 4.77 L2.93 4.18 A5.1 5.1 0 0 1 2.16 4.62 L1.57 6.82 A7.0 7.0 0 0 1 -1.57 6.82 L-2.16 4.62 A5.1 5.1 0 0 1 -2.93 4.18 L-5.12 4.77 A7.0 7.0 0 0 1 -6.69 2.05 L-5.08 0.44 A5.1 5.1 0 0 1 -5.08 -0.44 L-6.69 -2.05 A7.0 7.0 0 0 1 -5.12 -4.77 L-2.93 -4.18 A5.1 5.1 0 0 1 -2.16 -4.62 Z"/><circle cx="0" cy="0" r="2.9" fill="none" stroke="#333333" stroke-width="1.2"/></g></svg>
<div style="position:absolute;left:1044.70px;top:798.00px;width:107.30px;height:26.00px;background:#4681e7;border-radius:13px;"></div>
<div style="position:absolute;left:1055.53px;top:804.00px;font-size:10.5px;line-height:14.00px;font-weight:400;color:#ffffff;letter-spacing:-0.109px;white-space:pre;">View on the map &gt;</div>
<div style="position:absolute;left:1156.40px;top:472.00px;width:3.50px;height:268.50px;background:#eeeeee;border-radius:2px;"></div>
<div style="position:absolute;left:1156.40px;top:472.00px;width:3.50px;height:134.30px;background:#888888;border-radius:2px;"></div>
<div style="position:absolute;left:621.00px;top:96.00px;width:362.00px;height:267.80px;background:#3c3c3c;border-radius:8px;box-shadow:0 2px 8px rgba(0,0,0,0.18);"></div>
<div style="position:absolute;left:714.42px;top:112.00px;font-size:14.5px;line-height:18.00px;font-weight:400;color:#f2f2f2;letter-spacing:0.225px;white-space:pre;">Tracking Round name#6</div>
<div style="position:absolute;left:700.00px;top:135.00px;width:67.70px;height:17.80px;background:#6aae1f;border-radius:9px;"></div>
<div style="position:absolute;left:707.11px;top:137.00px;font-size:11px;line-height:14.00px;font-weight:400;color:#ffffff;letter-spacing:-0.165px;white-space:pre;">In progress</div>
<div style="position:absolute;left:772.22px;top:136.00px;font-size:12px;line-height:16.00px;font-weight:400;color:#bdbdbd;letter-spacing:-0.075px;white-space:pre;">30/10/2024 &gt; 07/11/2024</div>
<div style="position:absolute;left:640.22px;top:168.00px;font-size:12px;line-height:16.00px;font-weight:400;color:#eeeeee;letter-spacing:0.223px;white-space:pre;">Organization Name</div>
<div style="position:absolute;left:640.22px;top:191.00px;font-size:12px;line-height:16.00px;font-weight:400;color:#eeeeee;letter-spacing:0.317px;white-space:pre;">Activity Name</div>
<div style="position:absolute;left:640.70px;top:216.30px;width:322.30px;height:1.10px;background:#5e5e5e;border-radius:0px;"></div>
<div style="position:absolute;left:640.22px;top:229.00px;font-size:12px;line-height:16.00px;font-weight:400;color:#eeeeee;letter-spacing:0.112px;white-space:pre;">Geographic coverage</div>
<div style="position:absolute;left:765.08px;top:230.00px;font-size:10.5px;line-height:14.00px;font-weight:400;color:#d0d0d0;letter-spacing:-0.338px;white-space:pre;">33%</div>
<div style="position:absolute;left:789.20px;top:234.00px;width:25.50px;height:4.80px;background:#6b6b6b;border-radius:2.4px;"></div>
<div style="position:absolute;left:789.20px;top:234.00px;width:10.80px;height:4.80px;background:#f5890f;border-radius:2.4px;"></div>
<div style="position:absolute;left:640.22px;top:251.00px;font-size:12px;line-height:16.00px;font-weight:400;color:#eeeeee;letter-spacing:0.280px;white-space:pre;">Team Reporting</div>
<div style="position:absolute;left:736.28px;top:252.00px;font-size:10.5px;line-height:14.00px;font-weight:400;color:#d0d0d0;letter-spacing:-0.188px;white-space:pre;">33%</div>
<div style="position:absolute;left:760.30px;top:256.90px;width:25.50px;height:4.60px;background:#6b6b6b;border-radius:2.3px;"></div>
<div style="position:absolute;left:760.30px;top:256.90px;width:10.90px;height:4.60px;background:#f5890f;border-radius:2.3px;"></div>
<div style="position:absolute;left:640.22px;top:274.00px;font-size:12px;line-height:16.00px;font-weight:400;color:#eeeeee;letter-spacing:0.224px;white-space:pre;">Unique Teams</div>
<div style="position:absolute;left:726.76px;top:275.00px;font-size:11px;line-height:14.00px;font-weight:400;color:#d8d8d8;letter-spacing:0.000px;white-space:pre;">5</div>
<div style="position:absolute;left:640.22px;top:296.00px;font-size:12px;line-height:16.00px;font-weight:400;color:#eeeeee;letter-spacing:0.243px;white-space:pre;">Duration</div>
<div style="position:absolute;left:694.96px;top:298.00px;font-size:11px;line-height:14.00px;font-weight:400;color:#d8d8d8;letter-spacing:0.232px;white-space:pre;">5 days</div>
<svg style="position:absolute;left:829.50px;top:322.00px" width="20" height="20" viewBox="-10 -10 20 20"><g transform="scale(1.067)"><path fill="none" stroke="#f0f0f0" stroke-width="1.2" stroke-linejoin="round" d="M-2.16 -4.62 L-1.57 -6.82 A7.0 7.0 0 0 1 1.57 -6.82 L2.16 -4.62 A5.1 5.1 0 0 1 2.93 -4.18 L5.12 -4.77 A7.0 7.0 0 0 1 6.69 -2.05 L5.08 -0.44 A5.1 5.1 0 0 1 5.08 0.44 L6.69 2.05 A7.0 7.0 0 0 1 5.12 4.77 L2.93 4.18 A5.1 5.1 0 0 1 2.16 4.62 L1.57 6.82 A7.0 7.0 0 0 1 -1.57 6.82 L-2.16 4.62 A5.1 5.1 0 0 1 -2.93 4.18 L-5.12 4.77 A7.0 7.0 0 0 1 -6.69 2.05 L-5.08 0.44 A5.1 5.1 0 0 1 -5.08 -0.44 L-6.69 -2.05 A7.0 7.0 0 0 1 -5.12 -4.77 L-2.93 -4.18 A5.1 5.1 0 0 1 -2.16 -4.62 Z"/><circle cx="0" cy="0" r="2.9" fill="none" stroke="#f0f0f0" stroke-width="1.2"/></g></svg>
<div style="position:absolute;left:856.10px;top:319.30px;width:108.00px;height:25.90px;background:#4681e7;border-radius:13px;"></div>
<div style="position:absolute;left:867.33px;top:326.00px;font-size:10.5px;line-height:14.00px;font-weight:400;color:#ffffff;letter-spacing:-0.109px;white-space:pre;">View on the map &gt;</div>
<svg style="position:absolute;left:792px;top:370px" width="20" height="20" viewBox="0 0 20 20">
<path d="M7.2 2.6 C7.2 1.3 9.4 1.3 9.4 2.6 L9.4 8.3 C9.6 7.4 11.4 7.4 11.6 8.5 C11.8 7.6 13.6 7.6 13.8 8.8 C14.2 8.1 15.9 8.3 15.9 9.6 L15.7 13.6 C15.5 15.4 14.8 16.4 14.2 17.3 L8.4 17.3 C7.2 16 5.4 13.6 3.4 11.3 C2.7 10.4 3.8 9.2 4.9 9.9 L7.2 11.8 Z" fill="#fff" stroke="#000" stroke-width="1.3" stroke-linejoin="round"/>
<path d="M10.2 12.2 V15 M12.2 12.2 V15 M14.2 12.2 V15" stroke="#000" stroke-width="0.8"/></svg>
</div></body></html>
